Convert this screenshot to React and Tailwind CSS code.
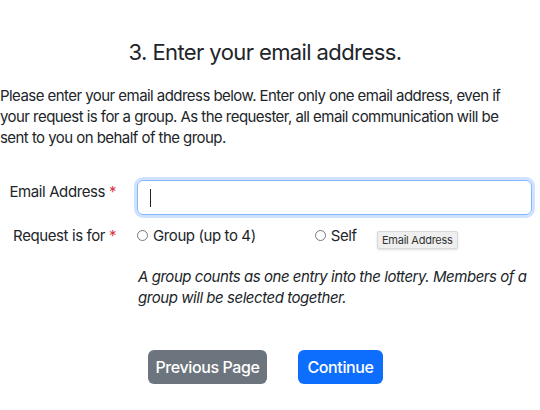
export default function App() {
  const font = { fontFamily: "Inter, 'Noto Sans', sans-serif" };
  return (
    <div className="w-[540px] h-[410px] bg-white text-[#212529] relative overflow-hidden" style={font}>
      <h2 className="text-center text-[22px] leading-[28px] pt-[38px] pr-[10px] tracking-[-0.6px]">3. Enter your email address.</h2>
      <p className="mt-[19px] text-[15px] leading-[21px] pr-[34px] tracking-[-0.55px]">
        Please enter your email address below. Enter only one email address, even if your request is for a group. As the requester, all email communication will be sent to you on behalf of the group.
      </p>
      <div className="mt-[32px] flex items-start">
        <div className="w-[116px] text-right text-[15px] leading-[21px] pt-[1px] tracking-[-0.4px]">Email Address <span className="text-[#dc3545]">*</span></div>
        <div className="ml-[21px] w-[395px] h-[35px] rounded-[6px] border border-[#86b7fe] shadow-[0_0_0_3px_rgba(13,110,253,0.2)] flex items-center pl-[12px]">
          <div className="w-px h-[18px] bg-[#222]" />
        </div>
      </div>
      <div className="mt-[10px] flex items-center text-[15px] leading-[21px] tracking-[-0.4px]">
        <div className="w-[116px] text-right">Request is for <span className="text-[#dc3545]">*</span></div>
        <div className="ml-[21px] flex items-center">
          <span className="w-[11px] h-[11px] rounded-full border border-[#777] inline-block" />
          <span className="ml-[5px]">Group (up to 4)</span>
        </div>
        <div className="ml-[59px] flex items-center">
          <span className="w-[11px] h-[11px] rounded-full border border-[#777] inline-block" />
          <span className="ml-[5px]">Self</span>
        </div>
      </div>
      <div className="absolute left-[377px] top-[231px] h-[18px] px-[4px] bg-[#efefef] border border-[#d8d8d8] rounded-[2px] text-[11px] leading-[16px] text-[#333] tracking-[-0.25px] shadow-sm">Email Address</div>
      <p className="mt-[20px] ml-[138px] mr-[8px] italic text-[15px] leading-[21px] tracking-[-0.45px]">
        A group counts as one entry into the lottery. Members of a group will be selected together.
      </p>
      <div className="mt-[42px] flex ml-[148px] gap-[31px]">
        <button className="h-[34px] w-[119px] rounded-[6px] bg-[#6c757d] text-white text-[16px] font-medium tracking-[-0.4px]">Previous Page</button>
        <button className="h-[34px] w-[85px] rounded-[6px] bg-[#0d6efd] text-white text-[16px] font-medium tracking-[-0.4px]">Continue</button>
      </div>
    </div>
  );
}
